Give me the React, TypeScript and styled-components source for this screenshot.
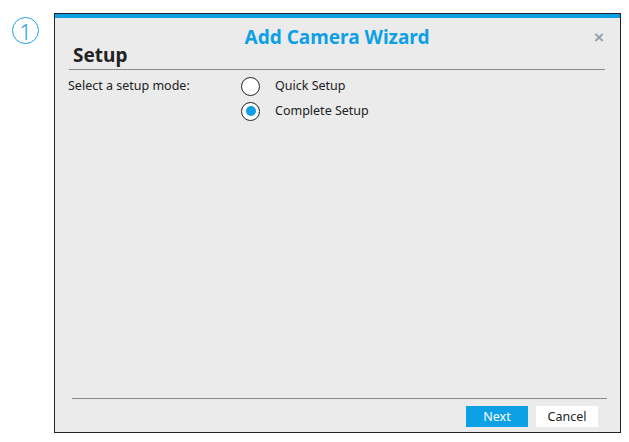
import React, { useState } from "react";
import styled, { createGlobalStyle } from "styled-components";

const GlobalStyle = createGlobalStyle`
  html, body {
    margin: 0;
    background: #ffffff;
    font-family: "Noto Sans", "Open Sans", Arial, sans-serif;
  }
`;

const Page = styled.div`
  display: flex;
  align-items: flex-start;
  gap: 15px;
  padding: 13px 0 0 12px;
`;

const StepMarker = styled.div`
  margin-top: 4px;
  width: 25px;
  height: 25px;
  border: 1px solid #1aa3e6;
  border-radius: 50%;
  display: grid;
  place-items: center;
  color: #1aa3e6;
  font-size: 22px;
  font-weight: 300;
  line-height: 1;
`;

const Dialog = styled.div`
  width: 565px;
  height: 418px;
  border: 1px solid #222;
  background: #ebebeb;
  display: flex;
  flex-direction: column;
`;

const AccentBar = styled.div`
  height: 4px;
  background: #08a0e6;
`;

const Header = styled.div`
  position: relative;
  padding: 6px 15px 0 14px;
`;

const Title = styled.h1`
  margin: 0;
  text-align: center;
  color: #0ea0e4;
  font-size: 19px;
  font-weight: 700;
  line-height: 26px;
`;

const CloseButton = styled.button`
  position: absolute;
  top: 8px;
  right: 16px;
  border: none;
  background: transparent;
  color: #9aa0a8;
  font-size: 17px;
  font-weight: 700;
  padding: 0;
  line-height: 24px;
  cursor: pointer;
`;

const SectionTitle = styled.h2`
  margin: -7px 0 0;
  padding: 0 0 2px 4px;
  border-bottom: 1px solid #888;
  color: #222;
  font-size: 19px;
  font-weight: 700;
  line-height: 24px;
`;

const Body = styled.div`
  flex: 1;
  display: grid;
  grid-template-columns: 173px 1fr;
  padding: 6px 15px 0 13px;
  align-content: start;
`;

const FieldLabel = styled.div`
  color: #222;
  font-size: 12.5px;
  line-height: 20px;
`;

const Options = styled.div`
  display: flex;
  flex-direction: column;
  gap: 5px;
`;

const Option = styled.label`
  display: flex;
  align-items: center;
  gap: 15px;
  color: #222;
  font-size: 12.5px;
  line-height: 20px;
  cursor: pointer;
`;

const RadioDot = styled.span<{ $checked: boolean }>`
  box-sizing: border-box;
  width: 19px;
  height: 19px;
  border-radius: 50%;
  border: 1.5px solid #222;
  background: #fff;
  display: grid;
  place-items: center;
  &::after {
    content: "";
    width: 10px;
    height: 10px;
    border-radius: 50%;
    background: ${(p) => (p.$checked ? "#0ea0e4" : "transparent")};
  }
`;

const Footer = styled.div`
  margin: 0 13px 0 17px;
  border-top: 1px solid #888;
  padding: 7px 9px 5px 0;
  display: flex;
  justify-content: flex-end;
  gap: 8px;
`;

const Button = styled.button<{ $primary?: boolean }>`
  width: 62px;
  height: 21px;
  border: none;
  padding: 0;
  font-family: inherit;
  font-size: 12.5px;
  background: ${(p) => (p.$primary ? "#0ea0e4" : "#ffffff")};
  color: ${(p) => (p.$primary ? "#ffffff" : "#222")};
  cursor: pointer;
`;

const modes = ["Quick Setup", "Complete Setup"];

const App = () => {
  const [mode, setMode] = useState(1);

  return (
    <>
      <GlobalStyle />
      <Page>
        <StepMarker>1</StepMarker>
        <Dialog>
          <AccentBar />
          <Header>
            <Title>Add Camera Wizard</Title>
            <CloseButton>×</CloseButton>
            <SectionTitle>Setup</SectionTitle>
          </Header>
          <Body>
            <FieldLabel>Select a setup mode:</FieldLabel>
            <Options>
              {modes.map((m, i) => (
                <Option key={m} onClick={() => setMode(i)}>
                  <RadioDot $checked={mode === i} />
                  {m}
                </Option>
              ))}
            </Options>
          </Body>
          <Footer>
            <Button $primary>Next</Button>
            <Button>Cancel</Button>
          </Footer>
        </Dialog>
      </Page>
    </>
  );
};

export default App;
